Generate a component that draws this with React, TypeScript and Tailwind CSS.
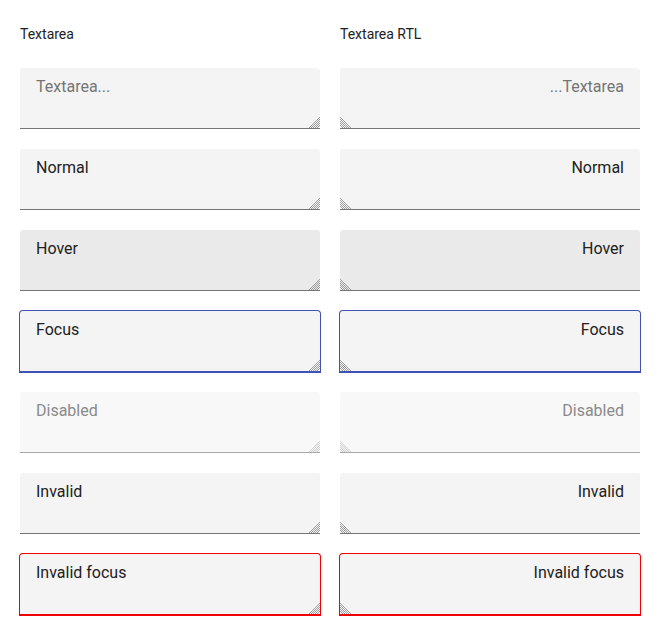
import React from "react";

type Row = {
  label: string;
  placeholder?: boolean;
  state?: "hover" | "focus" | "disabled" | "invalid" | "invalidFocus";
};

const rows: Row[] = [
  { label: "Textarea...", placeholder: true },
  { label: "Normal" },
  { label: "Hover", state: "hover" },
  { label: "Focus", state: "focus" },
  { label: "Disabled", state: "disabled" },
  { label: "Invalid", state: "invalid" },
  { label: "Invalid focus", state: "invalidFocus" },
];

// hatched resize grip, mirrored for rtl
const Grip = ({ rtl, faded }: { rtl?: boolean; faded?: boolean }) => (
  <svg
    width="11"
    height="11"
    viewBox="0 0 11 11"
    className={`pointer-events-none absolute bottom-[1px] ${rtl ? "left-0 -scale-x-100" : "right-0"}`}
  >
    {[11, 13, 15, 17, 19].map((c) => (
      <line
        key={c}
        x1={c - 11}
        y1={11}
        x2={11}
        y2={c - 11}
        stroke={faded ? "#bdbdbd" : "#7a7a7a"}
        strokeWidth="1"
        strokeDasharray="1 0.4"
      />
    ))}
  </svg>
);

const Field = ({ row, rtl }: { row: Row; rtl?: boolean }) => {
  const base =
    "block h-[61px] w-[300px] resize-none rounded-t-[3px] border-b px-4 pt-[9px] text-base leading-5 outline-none placeholder:text-[#757575]";

  let look = "bg-[#f4f4f4] border-[#757575] text-[#212121]";
  if (row.state === "hover") look = "bg-[#eaeaea] border-[#757575] text-[#212121]";
  if (row.state === "focus")
    look = "bg-[#f4f4f4] border-[#3f51b5] ring-1 ring-[#3f51b5] text-[#212121]";
  if (row.state === "disabled")
    look = "bg-[#f8f8f8] border-[#a8a8a8] text-[#8a8a8a]";
  if (row.state === "invalidFocus")
    look = "bg-[#f4f4f4] border-[#f00000] ring-1 ring-[#f00000] text-[#212121]";

  return (
    <div className="relative w-[300px]">
      <textarea
        dir={rtl ? "rtl" : "ltr"}
        className={`${base} ${look}`}
        placeholder={row.placeholder ? row.label : undefined}
        defaultValue={row.placeholder ? "" : row.label}
        disabled={row.state === "disabled"}
        readOnly
      />
      <Grip rtl={rtl} faded={row.state === "disabled"} />
    </div>
  );
};

const Column = ({ title, rtl }: { title: string; rtl?: boolean }) => (
  <div className="flex flex-col">
    <div className="mb-[24px] pt-[4px] text-[14px] leading-5 text-[#212121]">
      {title}
    </div>
    <div className="flex flex-col gap-5">
      {rows.map((r) => (
        <Field key={r.label} row={r} rtl={rtl} />
      ))}
    </div>
  </div>
);

export default function App() {
  return (
    <div
      className="min-h-screen bg-white p-5"
      style={{ fontFamily: "Roboto, 'Liberation Sans', sans-serif" }}
    >
      <div className="grid w-fit grid-cols-[300px_300px] gap-x-5">
        <Column title="Textarea" />
        <Column title="Textarea RTL" rtl />
      </div>
    </div>
  );
}
